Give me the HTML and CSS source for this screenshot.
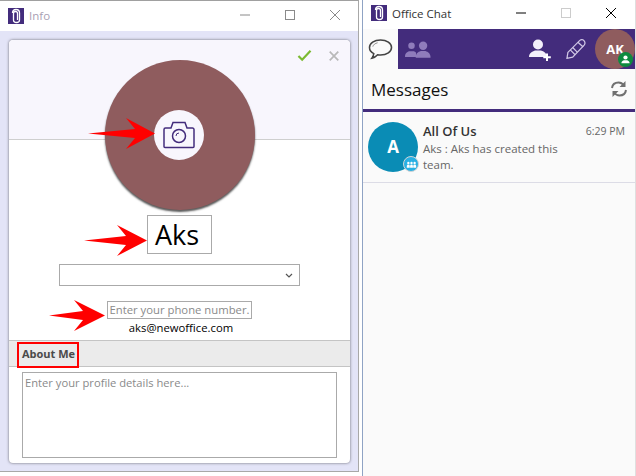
FILE: index.html
```html
<!DOCTYPE html>
<html lang="en">
<head>
    <meta charset="UTF-8">
    <meta name="viewport" content="width=device-width, initial-scale=1.0">
    <title>Office Chat</title>
    <link rel="stylesheet" href="styles.css">
</head>
<body>
    <div class="desktop">
        <!-- Info window -->
        <div class="info-window">
            <div class="titlebar info-titlebar">
                <svg class="app-logo" viewBox="0 0 16 16"><rect width="16" height="16" fill="#432c7c"/><path d="M4.5 5C4.500 2.500 6 1.500 8 1.500s3.500 1 3.500 3.500v7c0 1.500-1 2.500-3 2.500S5.500 13.500 5.500 12V5.500c0-1.200.8-2 2-2s2 .8 2 2V12" fill="none" stroke="#fff" stroke-width="1.300"/></svg>
                <span class="window-title muted">Info</span>
                <div class="window-buttons">
                    <svg viewBox="0 0 12 12"><path d="M1 6h10" stroke="#8a8a8a"/></svg>
                    <svg viewBox="0 0 12 12"><rect x="1.500" y="1.500" width="9" height="9" fill="none" stroke="#8a8a8a"/></svg>
                    <svg viewBox="0 0 12 12"><path d="M1 1l10 10M11 1L1 11" stroke="#8a8a8a" fill="none"/></svg>
                </div>
            </div>

            <div class="info-body">
                <div class="card">
                    <div class="card-header">
                        <svg class="action-icon" viewBox="0 0 16 14"><path d="M1.500 7.500l4 4L14.500 2" fill="none" stroke="#7cba32" stroke-width="2.400"/></svg>
                        <svg class="action-icon" viewBox="0 0 14 14"><path d="M2 2l10 10M12 2L2 12" fill="none" stroke="#b9b9b9" stroke-width="2"/></svg>
                    </div>

                    <div class="photo">
                        <div class="photo-button">
                            <svg viewBox="0 0 32 28" class="camera"><path d="M1 8.500A1.500 1.500 0 0 1 2.500 7H8L10 1.500h12L24 7h5.500A1.500 1.500 0 0 1 31 8.500v17a1 1 0 0 1-1 1H2a1 1 0 0 1-1-1z" fill="none" stroke="#432c7c" stroke-width="1.500"/><circle cx="16" cy="15" r="6.500" fill="none" stroke="#432c7c" stroke-width="1.500"/><path d="M13 15a3 3 0 0 1 3-3" fill="none" stroke="#432c7c"/></svg>
                        </div>
                    </div>

                    <div class="name-box">Aks</div>
                    <div class="select-box">
                        <svg viewBox="0 0 8 5"><path d="M1 1l3 3 3-3" fill="none" stroke="#555" stroke-width="1.200"/></svg>
                    </div>
                    <div class="phone-box">Enter your phone number.</div>
                    <div class="email">aks@newoffice.com</div>

                    <div class="about-bar"><span class="about-label">About Me</span></div>
                    <div class="details-box">Enter your profile details here...</div>
                </div>
            </div>

            <!-- Red arrows drawn over the form -->
            <svg class="arrow arrow-camera" viewBox="0 0 67 31"><path d="M0 15.500L47 11 38 0 67 15.500 38 31 47 20z" fill="#f00"/></svg>
            <svg class="arrow arrow-name" viewBox="0 0 63 31"><path d="M0 15.500L42 11 33 0 63 15.500 33 31 42 20z" fill="#f00"/></svg>
            <svg class="arrow arrow-phone" viewBox="0 0 56 31"><path d="M0 15.500L34 11 25 0 56 15.500 25 31 34 20z" fill="#f00"/></svg>
        </div>

        <!-- Chat window -->
        <div class="chat-window">
            <div class="titlebar chat-titlebar">
                <svg class="app-logo" viewBox="0 0 16 16"><rect width="16" height="16" fill="#432c7c"/><path d="M4.500 5C4.500 2.500 6 1.500 8 1.500s3.500 1 3.500 3.500v7c0 1.500-1 2.500-3 2.500S5.500 13.500 5.500 12V5.500c0-1.200.8-2 2-2s2 .8 2 2V12" fill="none" stroke="#fff" stroke-width="1.300"/></svg>
                <span class="window-title">Office Chat</span>
                <div class="window-buttons chat-buttons">
                    <svg viewBox="0 0 12 12"><path d="M1 6h10" stroke="#000"/></svg>
                    <svg viewBox="0 0 12 12"><rect x="1.500" y="1.500" width="9" height="9" fill="none" stroke="#ccc"/></svg>
                    <svg viewBox="0 0 12 12"><path d="M1 1l10 10M11 1L1 11" stroke="#000" fill="none"/></svg>
                </div>
            </div>

            <div class="nav">
                <div class="nav-tab">
                    <svg viewBox="0 0 26 24"><path d="M13 2C6.500 2 1.500 5.500 1.500 10c0 2.800 1.800 5 4.500 6.300-.2 1.700-.9 3.200-2 4.700 2.500-.5 4.700-2 6-3.500 1 .2 2 .3 3 .3 6.500 0 11.500-3.400 11.500-7.800S19.500 2 13 2z" fill="none" stroke="#444" stroke-width="1.600"/><path d="M5 9c.5-2 2.500-3.500 5-4" fill="none" stroke="#888"/></svg>
                </div>
                <div class="nav-bar">
                    <svg class="team-icon" viewBox="0 0 28 18"><g fill="#8f7cbb"><circle cx="7" cy="5" r="3.500"/><path d="M0 17c0-4 2-5 4.500-6h5c2 .7 2.500 1.500 2.500 2.500V17z"/><circle cx="19.500" cy="5" r="4.500"/><path d="M11.500 18c0-5 2.500-6.500 5.500-7.500h5c3 1 5.500 2.500 5.500 7.500z"/></g></svg>
                    <svg class="add-icon" viewBox="0 0 24 24"><g fill="#f3effa"><circle cx="10" cy="6.500" r="5"/><path d="M1 19c0-4 3-5.500 6-6.500h6c3 1 5.500 2.500 5.500 5.500V19z"/></g><path d="M19 15.500v7.500M15.300 19.200h7.500" stroke="#fff" stroke-width="2"/></svg>
                    <svg class="pencil-icon" viewBox="0 0 22 22"><g fill="none" stroke="#cfc6e4" stroke-width="1.300"><path d="M2 15L14.500 2.500c1.500-1.200 3.500-.8 4.500.5s1.200 3 0 4.500L7 20l-6 1.300z"/><path d="M4.500 12.500l5 5M7 10l5 5M12.500 4.500l5.500 5"/></g></svg>
                    <div class="nav-avatar">AK<span class="status-badge"><svg viewBox="0 0 12 12"><circle cx="6" cy="3.800" r="2.300" fill="#fff"/><path d="M1.500 10c0-2 1.500-3 3-3.300h3c1.500.3 3 1.300 3 3.300z" fill="#fff"/></svg></span></div>
                </div>
            </div>

            <div class="messages-head">
                <span>Messages</span>
                <svg viewBox="0 0 18 18"><g fill="none" stroke="#707070" stroke-width="2"><path d="M2 8c.5-3.500 3-5.500 6.500-5.500 2.500 0 4 1 5.500 3"/><path d="M16 10c-.5 3.500-3 5.500-6.500 5.500-2.500 0-4-1-5.500-3"/></g><path d="M15.500 1v6h-6zM2.500 17v-6h6z" fill="#707070"/></svg>
            </div>

            <div class="chat-row">
                <div class="chat-avatar">A<span class="group-badge"><svg viewBox="0 0 14 8"><g fill="#fff"><circle cx="3" cy="2" r="1.500"/><circle cx="7" cy="2" r="1.500"/><circle cx="11" cy="2" r="1.500"/><path d="M1 8V5.500L2 4h2l.8 1.500V8zM5.200 8V5.500L6 4h2l.8 1.500V8zM9.200 8V5.500L10 4h2l1 1.500V8z"/></g></svg></span></div>
                <div class="chat-text">
                    <div class="chat-top">
                        <span class="chat-name">All Of Us</span>
                        <span class="chat-time">6:29 PM</span>
                    </div>
                    <p>Aks : Aks has created this team.</p>
                </div>
            </div>
        </div>
    </div>
</body>
</html>
```

FILE: styles.css
```css
/* Global Styles */
body {
    margin: 0;
    background: #fff;
    font-family: 'Open Sans', 'Liberation Sans', sans-serif;
    color: #000;
}

.desktop {
    display: flex;
    width: 636px;
    height: 476px;
    overflow: hidden;
}

/* Title bars */
.titlebar {
    display: flex;
    background: #fff;
    flex-shrink: 0;
}

.app-logo {
    width: 16px;
    height: 16px;
}

.window-title {
    font-size: 11.5px;
    line-height: 18px;
    margin-left: 5px;
    color: #333;
}

.window-title.muted {
    color: #a99fb4;
}

.window-buttons {
    display: flex;
    margin-left: auto;
    gap: 33px;
}

.window-buttons svg {
    width: 12px;
    height: 12px;
}

/* Info window */
.info-window {
    position: relative;
    width: 359px;
    height: 472px;
    box-sizing: border-box;
    border-top: 1px solid #a0a0a0;
    border-bottom: 1px solid #a8a8a8;
    border-right: 1px solid #a8a8a8;
    display: flex;
    flex-direction: column;
}

.info-titlebar {
    height: 30px;
    padding-left: 8px;
    align-items: center;
}

.info-titlebar .window-buttons {
    margin: -2px 17px 0 auto;
}

.info-body {
    flex: 1;
    min-height: 0;
    background: #e3e4f7;
    padding: 9px 8px 8px 9px;
}

.card {
    position: relative;
    height: 100%;
    background: #fff;
    border-radius: 4px;
    box-shadow: 0 0 3px rgba(0, 0, 0, 0.55);
    display: flex;
    flex-direction: column;
    align-items: center;
    overflow: hidden;
}

.card-header {
    align-self: stretch;
    height: 100px;
    box-sizing: border-box;
    flex-shrink: 0;
    background: #f8f6fd;
    border-bottom: 1px solid #cfcfcf;
    border-radius: 4px 4px 0 0;
    display: flex;
    justify-content: flex-end;
    align-items: flex-start;
    gap: 16px;
    padding: 9px 10px 0 0;
}

.action-icon {
    width: 15px;
    height: 13px;
}

.action-icon + .action-icon {
    width: 12px;
    height: 12px;
    margin-top: 1px;
}

/* Photo sits over the header line */
.photo {
    position: absolute;
    left: 96px;
    top: 20px;
    width: 150px;
    height: 150px;
    border-radius: 50%;
    background: #8f5c5e;
    box-shadow: 0 2px 2px rgba(0, 0, 0, 0.65);
    display: flex;
    align-items: center;
    justify-content: center;
}

.photo-button {
    width: 50px;
    height: 50px;
    margin-right: 2px;
    border-radius: 50%;
    background: #f8f6fd;
    display: flex;
    align-items: center;
    justify-content: center;
}

.camera {
    width: 32px;
    height: 28px;
}

.name-box {
    margin-top: 75px;
    width: 65px;
    height: 39px;
    box-sizing: border-box;
    border: 1px solid #aaa;
    padding-right: 5px;
    font-size: 27px;
    line-height: 37px;
    text-align: center;
}

.select-box {
    margin-top: 10px;
    width: 241px;
    height: 22px;
    box-sizing: border-box;
    border: 1px solid #aaa;
    display: flex;
    align-items: center;
    justify-content: flex-end;
    padding-right: 6px;
}

.select-box svg {
    width: 8px;
    height: 5px;
}

.phone-box {
    margin-top: 15px;
    width: 145px;
    height: 18px;
    box-sizing: border-box;
    border: 1px solid #aaa;
    font-size: 11.3px;
    line-height: 16px;
    color: #8a8a8a;
    text-align: center;
    white-space: nowrap;
}

.email {
    font-size: 11.3px;
    line-height: 16px;
    margin: 1px 0 0 3px;
}

.about-bar {
    align-self: stretch;
    flex-shrink: 0;
    margin-top: 4px;
    height: 27px;
    box-sizing: border-box;
    background: #ebebeb;
    border-top: 1px solid #c4c4c4;
    border-bottom: 1px solid #c4c4c4;
    padding: 1px 0 0 8px;
}

.about-label {
    display: block;
    width: 62px;
    height: 26px;
    box-sizing: border-box;
    border: 2px solid #f00;
    font-size: 11px;
    font-weight: bold;
    line-height: 20px;
    color: #4a4a4a;
    padding-left: 3px;
    white-space: nowrap;
}

.details-box {
    margin-top: 5px;
    width: 315px;
    height: 86px;
    box-sizing: border-box;
    border: 1px solid #aaa;
    font-size: 11.2px;
    color: #8a8a8a;
    padding: 2px 2px;
}

/* Red arrows */
.arrow {
    position: absolute;
    height: 31px;
}

.arrow-camera {
    left: 88px;
    top: 117px;
    width: 67px;
}

.arrow-name {
    left: 84px;
    top: 224px;
    width: 63px;
}

.arrow-phone {
    left: 49px;
    top: 299px;
    width: 56px;
}

/* Chat window */
.chat-window {
    width: 274px;
    margin-left: 3px;
    box-sizing: border-box;
    border-left: 1px solid #8fa3c4;
    border-right: 1px solid #dfdfdf;
    background: #fafafa;
    display: flex;
    flex-direction: column;
}

.chat-titlebar {
    height: 29px;
    box-sizing: border-box;
    padding: 5px 0 0 8px;
}

.chat-buttons {
    margin: 2px 18px 0 auto;
}

.nav {
    display: flex;
    height: 40px;
    flex-shrink: 0;
}

.nav-tab {
    width: 35px;
    display: flex;
    align-items: center;
    justify-content: center;
}

.nav-tab svg {
    width: 25px;
    height: 23px;
}

.nav-bar {
    flex: 1;
    background: #432c7c;
    display: flex;
    align-items: center;
    padding-left: 7px;
}

.team-icon {
    width: 26px;
    height: 17px;
}

.add-icon {
    width: 24px;
    height: 24px;
    margin-left: 97px;
    margin-top: 1px;
}

.pencil-icon {
    width: 21px;
    height: 21px;
    margin-left: 14px;
    margin-bottom: 2px;
}

.nav-avatar {
    position: relative;
    width: 40px;
    height: 40px;
    margin-left: auto;
    border-radius: 50%;
    background: #8f5c5e;
    color: #fff;
    font-size: 13px;
    font-weight: bold;
    line-height: 40px;
    text-align: center;
}

.status-badge {
    position: absolute;
    right: 2px;
    bottom: 2px;
    width: 15px;
    height: 15px;
    border-radius: 50%;
    background: #0d8a3f;
    display: flex;
    align-items: center;
    justify-content: center;
}

.status-badge svg {
    width: 11px;
    height: 11px;
}

.messages-head {
    height: 40px;
    flex-shrink: 0;
    border-bottom: 3px solid #432c7c;
    display: flex;
    align-items: center;
    justify-content: space-between;
    padding: 0 7px 0 8px;
    font-size: 17px;
    color: #111;
}

.messages-head svg {
    width: 18px;
    height: 18px;
}

.chat-row {
    display: flex;
    height: 71px;
    box-sizing: border-box;
    border-bottom: 1px solid #dcdce6;
    padding: 10px 0 0 5px;
}

.chat-avatar {
    position: relative;
    width: 50px;
    height: 50px;
    flex-shrink: 0;
    border-radius: 50%;
    background: #0a8cb5;
    color: #fff;
    font-size: 17px;
    font-weight: bold;
    line-height: 50px;
    text-align: center;
}

.group-badge {
    position: absolute;
    right: -1px;
    bottom: 0;
    width: 16px;
    height: 16px;
    box-sizing: border-box;
    border: 1px solid #d5d5d5;
    border-radius: 50%;
    background: #29b0e3;
    display: flex;
    align-items: center;
    justify-content: center;
}

.group-badge svg {
    width: 11px;
    height: 7px;
}

.chat-text {
    flex: 1;
    margin-left: 5px;
    padding-right: 10px;
}

.chat-top {
    display: flex;
    justify-content: space-between;
    align-items: center;
    height: 20px;
    margin-top: -1px;
}

.chat-name {
    font-size: 13px;
    font-weight: 600;
    color: #333;
}

.chat-time {
    font-size: 10.5px;
    color: #666;
}

.chat-text p {
    margin: 0;
    width: 140px;
    font-size: 11.5px;
    line-height: 16px;
    color: #666;
}
```
